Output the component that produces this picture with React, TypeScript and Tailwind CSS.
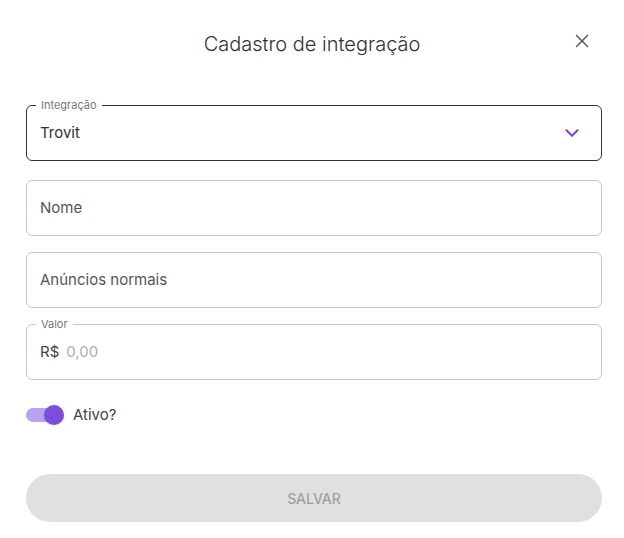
import { X, ChevronDown } from 'lucide-react';

export default function App() {
  return (
    <div className="w-[624px] h-[538px] bg-white font-['Inter',sans-serif] text-[#333]">
      <div className="relative flex justify-center pt-[31px] h-[105px]">
        <h1 className="text-[20px] font-light text-[#333] leading-[26px]">Cadastro de integração</h1>
        <button className="absolute right-[31px] top-[30px] text-[#555]">
          <X size={22} strokeWidth={1.5} />
        </button>
      </div>

      <div className="pl-[26px] pr-[22px] flex flex-col">
        <div className="relative h-[56px] border border-[#333] rounded-[6px] pl-[13px] pr-[18px] flex items-center justify-between">
          <span className="absolute -top-[7px] left-[9px] bg-white px-[5px] text-[11px] leading-[12px] text-[#777]">Integração</span>
          <span className="text-[15px] text-[#333]">Trovit</span>
          <ChevronDown size={22} strokeWidth={2.4} className="text-[#7c4ddb]" />
        </div>

        <div className="mt-[19px] h-[56px] border border-[#c8c8c8] rounded-[6px] px-[13px] flex items-center text-[15px] text-[#555]">
          Nome
        </div>

        <div className="mt-[16px] h-[56px] border border-[#c8c8c8] rounded-[6px] px-[13px] flex items-center text-[15px] text-[#555]">
          Anúncios normais
        </div>

        <div className="relative mt-[16px] h-[56px] border border-[#c8c8c8] rounded-[6px] px-[13px] flex items-center gap-[7px]">
          <span className="absolute -top-[7px] left-[9px] bg-white px-[5px] text-[11px] leading-[12px] text-[#777]">Valor</span>
          <span className="text-[15px] text-[#444]">R$</span>
          <span className="text-[15px] text-[#b0b0b0]">0,00</span>
        </div>

        <div className="flex items-center gap-[9px] mt-[25px] h-[20px]">
          <div className="relative w-[38px] h-[20px] flex items-center">
            <div className="w-[34px] h-[14px] rounded-full bg-[#b8a3ee]" />
            <div className="absolute right-0 top-0 w-[20px] h-[20px] rounded-full bg-[#7b4fdb] shadow" />
          </div>
          <span className="text-[15px] text-[#444]">Ativo?</span>
        </div>

        <button className="mt-[49px] h-[48px] w-full rounded-full bg-[#e0e0e0] text-[14px] font-medium text-[#a0a0a0]">
          SALVAR
        </button>
      </div>
    </div>
  );
}
